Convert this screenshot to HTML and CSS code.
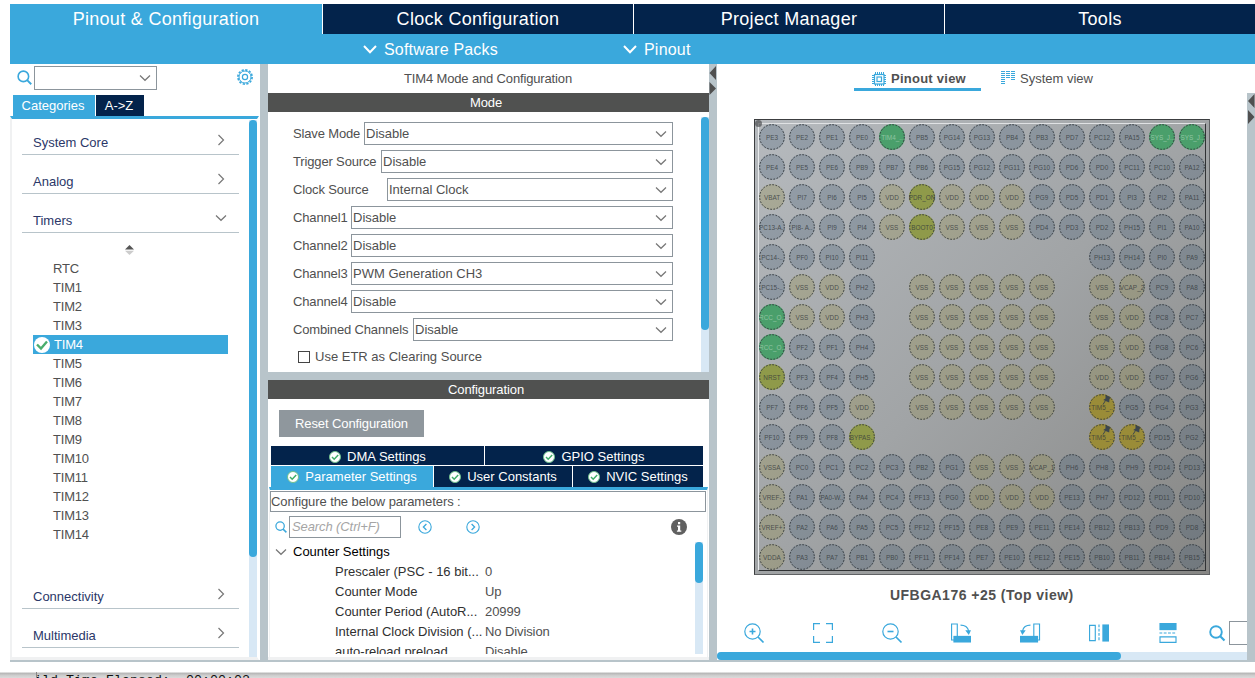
FILE: index.html
```html
<!DOCTYPE html>
<html lang="en">
<head>
<meta charset="utf-8">
<title>Pinout &amp; Configuration</title>
<link rel="stylesheet" href="styles.css">
</head>
<body>
<svg class="defs">
  <symbol id="down" viewBox="0 0 12 8"><path d="M1 1.5 6 6.3 11 1.5" fill="none" stroke="currentColor" stroke-width="1.2"/></symbol>
  <symbol id="right" viewBox="0 0 8 12"><path d="M1.5 1 6.5 6 1.5 11" fill="none" stroke="currentColor" stroke-width="1.2"/></symbol>
  <symbol id="search" viewBox="0 0 16 16"><circle cx="6.8" cy="6.8" r="5.6" fill="none" stroke="currentColor" stroke-width="1.7"/><path d="M10.8 10.8 15.2 15.2" stroke="currentColor" stroke-width="2"/></symbol>
  <symbol id="ok" viewBox="0 0 12 12"><circle cx="6" cy="6" r="5.5" fill="#fff" stroke="#6fc08c"/><path d="M3 6 5.2 8.2 9.2 4" fill="none" stroke="#3fae69" stroke-width="1.5"/></symbol>
</svg>
<div class="window">
  <nav class="main-tabs">
    <div class="main-tab active">Pinout &amp; Configuration</div>
    <div class="main-tab">Clock Configuration</div>
    <div class="main-tab">Project Manager</div>
    <div class="main-tab">Tools</div>
  </nav>
  <div class="sub-bar">
    <span class="sub-item packs"><svg viewBox="0 0 14 9"><path d="M1 1 7 7.2 13 1" fill="none" stroke="#fff" stroke-width="2"/></svg>Software Packs</span>
    <span class="sub-item"><svg viewBox="0 0 14 9"><path d="M1 1 7 7.2 13 1" fill="none" stroke="#fff" stroke-width="2"/></svg>Pinout</span>
  </div>
  <main class="panes">
    <aside class="left">
      <div class="left-search">
        <svg class="s16"><use href="#search"/></svg>
        <div class="combo find"><svg class="chev"><use href="#down"/></svg></div>
        <svg class="gear" viewBox="0 0 16 16" fill="none" stroke="#3aa8dc"><circle cx="8" cy="8" r="7.1" stroke-width="1.7" stroke-dasharray="2.3 1.42"/><circle cx="8" cy="8" r="6"/><circle cx="8" cy="8" r="2.6" stroke-width="1.2"/></svg>
      </div>
      <div class="left-tabs"><span class="on">Categories</span><span class="az">A-&gt;Z</span></div>
      <div class="left-body">
        <div class="cats">
          <div class="cat">System Core<svg class="cr"><use href="#right"/></svg></div>
          <div class="cat">Analog<svg class="cr"><use href="#right"/></svg></div>
          <div class="cat">Timers<svg class="chev"><use href="#down"/></svg></div>
          <svg class="sorter" viewBox="0 0 9 10"><path d="M0 4.4 4.5 0 9 4.4z" fill="#555"/><path d="M0 5.8h9L4.5 10z" fill="#ccc"/></svg>
          <ul class="timers" id="timers"></ul>
          <div class="cat">Connectivity<svg class="cr"><use href="#right"/></svg></div>
          <div class="cat">Multimedia<svg class="cr"><use href="#right"/></svg></div>
        </div>
        <div class="track"><div class="thumb left-thumb"></div></div>
      </div>
    </aside>
    <section class="middle">
      <h2 class="mid-title">TIM4 Mode and Configuration</h2>
      <div class="bar">Mode</div>
      <div class="mode">
        <div class="mode-form">
          <div class="row">Slave Mode<div class="combo c1">Disable<svg class="chev"><use href="#down"/></svg></div></div>
          <div class="row">Trigger Source<div class="combo c2">Disable<svg class="chev"><use href="#down"/></svg></div></div>
          <div class="row">Clock Source<div class="combo c3">Internal Clock<svg class="chev"><use href="#down"/></svg></div></div>
          <div class="row">Channel1<div class="combo c4">Disable<svg class="chev"><use href="#down"/></svg></div></div>
          <div class="row">Channel2<div class="combo c4">Disable<svg class="chev"><use href="#down"/></svg></div></div>
          <div class="row">Channel3<div class="combo c4">PWM Generation CH3<svg class="chev"><use href="#down"/></svg></div></div>
          <div class="row">Channel4<div class="combo c4">Disable<svg class="chev"><use href="#down"/></svg></div></div>
          <div class="row">Combined Channels<div class="combo c5">Disable<svg class="chev"><use href="#down"/></svg></div></div>
          <div class="check"><i class="box"></i>Use ETR as Clearing Source</div>
        </div>
        <div class="track mode-track"><div class="thumb mode-thumb"></div></div>
      </div>
      <div class="split"></div>
      <div class="bar">Configuration</div>
      <div class="config">
        <div class="reset">Reset Configuration</div>
        <div class="ctabs top"><span><svg class="ok"><use href="#ok"/></svg>DMA Settings</span><span><svg class="ok"><use href="#ok"/></svg>GPIO Settings</span></div>
        <div class="ctabs bottom"><span class="on"><svg class="ok"><use href="#ok"/></svg>Parameter Settings</span><span><svg class="ok"><use href="#ok"/></svg>User Constants</span><span><svg class="ok"><use href="#ok"/></svg>NVIC Settings</span></div>
        <div class="cpanel">
          <div class="hint">Configure the below parameters :</div>
          <div class="psearch">
            <svg class="s12"><use href="#search"/></svg>
            <div class="pinput">Search (Ctrl+F)</div>
            <svg class="nav prev" viewBox="0 0 14 14" fill="none" stroke="#3aa8dc"><circle cx="7" cy="7" r="6.2" stroke-width="1.1"/><path d="M8.4 4 5.4 7l3 3" stroke-width="1.3"/></svg>
            <svg class="nav next" viewBox="0 0 14 14" fill="none" stroke="#3aa8dc"><circle cx="7" cy="7" r="6.2" stroke-width="1.1"/><path d="M5.6 4l3 3-3 3" stroke-width="1.3"/></svg>
            <svg class="info" viewBox="0 0 16 16"><circle cx="8" cy="8" r="8" fill="#606060"/><path d="M7 3h2.2v2.2H7zM6 6.5h3.2v5H10.3v1.3H5.9v-1.3H7V7.8H6z" fill="#fff"/></svg>
          </div>
          <div class="ptree">
            <div class="prows">
              <div class="phead"><svg class="chev"><use href="#down"/></svg>Counter Settings</div>
              <div class="prow"><span>Prescaler (PSC - 16 bit...</span><b>0</b></div>
              <div class="prow"><span>Counter Mode</span><b>Up</b></div>
              <div class="prow"><span>Counter Period (AutoR...</span><b>20999</b></div>
              <div class="prow"><span>Internal Clock Division (...</span><b>No Division</b></div>
              <div class="prow"><span>auto-reload preload</span><b>Disable</b></div>
            </div>
            <div class="track ptrack"><div class="thumb pthumb"></div></div>
          </div>
        </div>
      </div>
    </section>
    <div class="divider"><svg viewBox="0 0 8 32"><path d="M7 2v14L.5 9zM.5 18v13L7 24.500z" fill="#505050"/></svg></div>
    <section class="right">
      <div class="vtabs">
        <div class="vtab on"><svg class="chip" viewBox="0 0 14 14" fill="none" stroke="#3aa8dc"><path d="M3.500 0v14M5.500 0v14M7.500 0v14M9.500 0v14M11.500 0v14M0 3.500h14M0 5.500h14M0 7.500h14M0 9.500h14M0 11.500h14" stroke-width="1"/><rect x="2.500" y="2.500" width="9.500" height="9.500" fill="#fff" stroke-width="1.200"/><rect x="5" y="5" width="4.500" height="4.500" stroke-width="1.200"/></svg>Pinout view</div>
        <div class="vtab"><svg class="sys" viewBox="0 0 14 14" fill="none" stroke="#3aa8dc"><path d="M0 .500h4M0 2.500h4M0 4.500h4M0 6.500h4M0 8.500h4M0 10.500h4M0 12.500h4M5 .500h4M5 2.500h4M5 4.500h4M5 6.500h4M10 .500h4M10 2.500h4M10 4.500h4M10 6.500h4M10 8.500h4"/></svg>System view</div>
      </div>
      <div class="canvas-wrap">
        <div class="canvas">
          <div class="package"><i class="mark"></i><div class="pins" id="pins"></div></div>
          <div class="pkg-name">UFBGA176 +25 (Top view)</div>
          <div class="tools">
            <svg viewBox="0 0 20 20"><circle cx="8.500" cy="8.500" r="7.700"/><path d="M8.500 5.500v6M5.500 8.500h6" stroke-width="1.600"/><path d="M14 14l5.500 5.500" stroke-width="1.700"/></svg>
            <svg viewBox="0 0 20 20"><path d="M.6 7V.6H7M13 .6h6.400V7M19.400 13v6.400H13M7 19.400H.6V13"/></svg>
            <svg viewBox="0 0 20 20"><circle cx="8.500" cy="8.500" r="7.700"/><path d="M5.500 8.500h6" stroke-width="1.600"/><path d="M14 14l5.500 5.500" stroke-width="1.700"/></svg>
            <svg viewBox="0 0 21 20"><path d="M.6.600h6v16.800h-6z"/><path d="M2.500 13H21v7H2.500z" fill="#3aa8dc" stroke="none"/><path d="M10 1.800c4 0 7.500 2 8.600 6"/><path d="M15 7h6l-2.300 5z" fill="#3aa8dc" stroke="none"/></svg>
            <svg viewBox="0 0 21 20"><path d="M14.500.600h6v16.800h-6z"/><path d="M0 13h19v7H0z" fill="#3aa8dc" stroke="none"/><path d="M11 1.800C7 1.800 3.500 4 2.600 8"/><path d="M0 7h6l-3.500 5z" fill="#3aa8dc" stroke="none"/></svg>
            <svg viewBox="0 0 21 20"><path d="M.6 2h6v16h-6z"/><path d="M10.500 1v18" stroke-dasharray="3 1.500"/><path d="M14 1h7v18h-7z" fill="#3aa8dc" stroke="none"/></svg>
            <svg viewBox="0 0 20 21"><path d="M1 0h18v7.500H1z" fill="#3aa8dc" stroke="none"/><path d="M1 10.500h18" stroke-dasharray="3 1.500"/><path d="M1.600 14.500h16.800v5.900H1.600z"/></svg>
          </div>
          <div class="tool-search"><svg class="s17" viewBox="0 0 16 16"><circle cx="7" cy="7" r="5.800" fill="none" stroke="#3aa8dc" stroke-width="1.900"/><path d="M11 11l4.500 4.500" stroke="#3aa8dc" stroke-width="2.200"/></svg><div class="tinput"></div></div>
          <div class="htrack"><div class="hthumb"></div></div>
        </div>
        <div class="edge"><svg viewBox="0 0 8 32"><path d="M7.500 1v14L1 8zM1 17v14L7.500 24z" fill="#505050"/></svg></div>
      </div>
    </section>
  </main>
</div>
<footer class="console"><div class="log">ild Time Elapsed:&nbsp; 00:00:02</div></footer>
<script src="script.js"></script>
</body>
</html>
```
FILE: styles.css
```css
* { box-sizing: border-box; }
body { margin: 0; width: 1255px; height: 678px; overflow: hidden; background: #fff; font: 13px/18px "Liberation Sans", Arial, sans-serif; color: #505050; white-space: nowrap; }
svg { display: block; flex: none; overflow: visible; }
.defs { position: absolute; width: 0; height: 0; }
.window { padding: 4px 0 0 10px; height: 672px; }
.main-tabs { display: grid; grid-template-columns: 312px 310px 310px 310px; gap: 1px; height: 30px; }
.main-tab { background: #03234b; color: #fff; font-size: 18px; line-height: 31px; height: 30px; text-align: center; letter-spacing: .3px; }
.main-tab.active { background: #3aa8dc; }
.sub-bar { display: flex; height: 30px; background: #3aa8dc; color: #fff; font-size: 16px; line-height: 30px; padding: 1px 0 0 353px; letter-spacing: .2px; }
.sub-item { display: flex; align-items: center; gap: 7px; width: 260px; }
.sub-item svg { width: 14px; height: 9px; }
.panes { display: flex; height: 598px; border-bottom: 2px solid #b8c4ca; }

.left { width: 258px; border-right: 8px solid #b8c4ca; display: flex; flex-direction: column; }
.left-search { display: flex; flex: none; height: 31px; padding: 2px 0 0 7px; color: #3aa8dc; }
.s16 { width: 15px; height: 15px; margin-top: 4px; }
.combo { border: 1px solid #8c959c; height: 23px; flex: 1; display: flex; align-items: center; justify-content: space-between; padding: 0 5px 0 1px; color: #505050; letter-spacing: 0; }
.combo.find { flex: none; width: 123px; height: 24px; margin-left: 2px; justify-content: flex-end; }
.chev { width: 12px; height: 8px; color: #777; }
.cr { width: 8px; height: 12px; color: #777; margin: 0 2px 6px 0; }
.gear { width: 16px; height: 16px; margin: 3px 0 0 80px; }
.left-tabs { display: flex; flex: none; gap: 1px; height: 21px; padding-left: 3px; color: #fff; line-height: 21px; text-align: center; }
.left-tabs span { background: #3aa8dc; width: 82px; padding-right: 2px; }
.left-tabs .az { background: #03234b; width: 48px; }
.left-body { flex: none; height: 544px; display: flex; border-top: 3px solid #3aa8dc; border-left: 2px solid #f0f1f2; border-bottom: 3px solid #f0f1f2; margin-right: 1px; border-right: 2px solid #fff; padding-top: 1px; }
.cats { flex: 1; padding: 0 10px; }
.cat { display: flex; justify-content: space-between; align-items: center; height: 39px; padding: 15px 12px 0 11px; border-bottom: 1px solid #b8c4ca; color: #2b3768; }
.cat:first-child { height: 35px; padding-top: 11px; }
.cat .chev { margin-bottom: 5px; }
.sorter { width: 9px; height: 10px; margin: 12px auto 0 103px; }
.timers { list-style: none; margin: 4px 11px 26px; padding: 0; letter-spacing: -.2px; }
.timers li { height: 19px; line-height: 19px; padding-left: 20px; color: #505050; }
.timers .sel { background: #3aa8dc; color: #fff; display: flex; align-items: center; gap: 4px; padding-left: 1px; }
.timers .sel svg { width: 16px; height: 16px; }
.track { width: 8px; background: #d8e8f5; }
.thumb { width: 8px; background: #3aa8dc; border-radius: 4px; }
.left-thumb { height: 437px; }

.middle { width: 441px; display: flex; flex-direction: column; }
.mid-title { margin: 0; height: 29px; font: inherit; line-height: 29px; text-align: center; letter-spacing: -.15px; padding-right: 1px; }
.bar { height: 19px; flex: none; background: #505150; color: #fff; line-height: 19px; text-align: center; padding-right: 5px; letter-spacing: -.1px; }
.mode { display: flex; height: 260px; padding-top: 5px; }
.mode-form { flex: 1; padding: 5px 28px 0 25px; }
.row { display: flex; align-items: center; justify-content: space-between; height: 23px; margin-bottom: 5px; letter-spacing: -.15px; }
.row .combo { flex: none; }
.c1 { width: 309px; }
.c2 { width: 292px; }
.c3 { width: 286px; }
.c4 { width: 322px; }
.c5 { width: 260px; }
.check { display: flex; align-items: center; gap: 5px; padding-left: 5px; height: 22px; }
.box { width: 12px; height: 12px; border: 1px solid #444; }
.mode-thumb { height: 213px; }
.split { height: 8px; background: #b8c4ca; }
.config { flex: 1; display: flex; flex-direction: column; padding: 11px 1px 0; border-bottom: 3px solid #f0f1f2; overflow: hidden; }
.reset { width: 145px; height: 27px; margin: 0 0 9px 10px; background: #8f979d; color: #fff; text-align: center; line-height: 27px; letter-spacing: -.1px; }
.ctabs { display: grid; gap: 1px; margin: 0 5px 0 2px; color: #fff; line-height: 16px; }
.ctabs.top { grid-template-columns: 213px 218px; height: 19px; margin-bottom: 1px; }
.ctabs.top span { padding-top: 2px; }
.ctabs.bottom { grid-template-columns: 162px 138px 130px; height: 21px; }
.ctabs span { background: #03234b; display: flex; align-items: center; justify-content: center; gap: 6px; padding-top: 1px; }
.ctabs .on { background: #3aa8dc; }
.ok { width: 12px; height: 12px; }
.cpanel { flex: 1; display: flex; flex-direction: column; border: 1px solid #f0f1f2; border-top: 3px solid #3aa8dc; border-bottom: 0; padding-top: 1px; }
.hint { height: 21px; line-height: 19px; width: 436px; border: 1px solid #8c959c; letter-spacing: -.08px; }
.psearch { display: flex; align-items: center; height: 30px; padding-left: 5px; color: #3aa8dc; }
.s12 { width: 12px; height: 12px; }
.pinput { width: 112px; height: 22px; line-height: 20px; margin-left: 2px; padding-left: 2px; border: 1px solid #8c959c; font-style: italic; color: #a5a5a5; letter-spacing: -.1px; }
.nav { width: 14px; height: 14px; }
.prev { margin-left: 17px; }
.next { margin-left: 34px; }
.info { width: 16px; height: 16px; margin-left: 191px; }
.ptree { display: flex; height: 112px; }
.prows { flex: 1; overflow: hidden; color: #303030; }
.phead, .prow { height: 20px; line-height: 19px; }
.phead { display: flex; align-items: center; gap: 6px; padding: 0 0 1px 5px; color: #000; }
.prow { display: grid; grid-template-columns: 150px 1fr; padding-left: 65px; }
.prow b { font-weight: normal; color: #505050; letter-spacing: -.1px; }
.ptrack { margin-right: 4px; }
.pthumb { height: 41px; }
.divider { width: 8px; background: #b8c4ca; }
.divider svg { width: 8px; height: 32px; }

.right { width: 538px; display: flex; flex-direction: column; }
.vtabs { display: flex; height: 29px; padding-left: 137px; gap: 18px; }
.vtab { display: flex; height: 27px; align-items: center; gap: 5px; border-bottom: 3px solid transparent; padding-top: 5px; }
.vtab.on { width: 127px; border-color: #3aa8dc; font-weight: bold; letter-spacing: .25px; padding-left: 18px; }
.chip { width: 14px; height: 14px; }
.sys { width: 14px; height: 14px; margin: 0 0 2px 2px; }
.canvas-wrap { display: flex; height: 567px; }
.canvas { width: 530px; display: grid; grid-template-columns: 490px 40px; grid-template-rows: 482px 38px 39px 8px; overflow: hidden; }
.edge { width: 8px; height: 569px; background: #b8c4ca; }
.edge svg { width: 8px; height: 32px; }
.package { grid-column: 1 / 3; position: relative; width: 456px; height: 456px; margin: 26px 0 0 37px; border: 1px solid #3c3e40; border-right-color: #606264; border-bottom-color: #606264; padding: 3px; background: linear-gradient(135deg, #b6babe 0%, #a1a4a6 50%, #868684 100%); }
.mark { position: absolute; left: 0; top: 0; width: 7px; height: 7px; border-radius: 50%; background: rgba(60, 62, 64, .6); }
.pins { display: grid; grid-template-columns: repeat(15, 30px); grid-auto-rows: 30px; width: 448px; height: 448px; border: 1px solid #303234; border-left-color: #e8eaec; border-top-color: #e0e2e4; }
.pin { width: 26px; height: 26px; border-radius: 50%; background: rgba(50, 78, 106, .25); font-size: 6.4px; line-height: 27px; color: rgba(50, 55, 58, .8); display: flex; justify-content: center; position: relative; }
.pin.power { background: rgba(145, 140, 70, .3); }
.pin.boot { background: #8f9a4a; }
.pin.green { background: #4a9f6b; color: #8fc4a2; }
.pin.gold { background: #9a8c38; }
.pin.none { visibility: hidden; }
.ring { position: absolute; left: 0; top: 0; width: 26px; height: 26px; fill: none; stroke: #34393d; stroke-dasharray: 1.6 1.62; }
.pushpin { position: absolute; right: 4px; top: 1px; width: 9px; height: 10px; }
.pkg-name { grid-column: 1 / 3; font-size: 14px; font-weight: bold; letter-spacing: .47px; padding-left: 173px; line-height: 40px; }
.tools { display: flex; gap: 49px; padding: 10px 0 0 27px; height: 33px; fill: none; stroke: #3aa8dc; stroke-width: 1.2; }
.tools svg { width: 20px; height: 20px; }
.tool-search { display: flex; gap: 4px; padding: 8px 0 0 2px; }
.s17 { width: 16px; height: 16px; margin-top: 4px; }
.tinput { width: 40px; height: 24px; flex: none; border: 1px solid #8c959c; }
.htrack { grid-column: 1 / 3; background: #d8e8f5; border-radius: 4px 0 0 4px; }
.hthumb { width: 404px; height: 8px; border-radius: 4px; background: #3aa8dc; }

.console { height: 6px; overflow: hidden; background: linear-gradient(#eee 0, #b9b9b9 25%, #cfcfcf 60%, #dadada 100%); }
.log { margin-left: 36px; width: 215px; height: 6px; padding-top: 1px; font: 13.33px/16px "Liberation Mono", "Courier New", monospace; color: #111; border-left: 1px solid #888; text-indent: -3px; overflow: hidden; }
```
FILE: script.js
```js
const timers = ["RTC"].concat(Array.from({ length: 14 }, (_, i) => "TIM" + (i + 1)));
document.getElementById("timers").innerHTML = timers.map(t => t === "TIM4"
  ? '<li class="sel"><svg viewBox="0 0 16 16"><circle cx="8" cy="8" r="8" fill="#fff"/><path d="M3 7.500 7 11.500 13 4.500" fill="none" stroke="#49ad6d" stroke-width="2.400"/></svg>TIM4</li>'
  : `<li>${t}</li>`).join("");

// One line per ball row; a dash is an unpopulated position.
const rows = `PE3 PE2 PE1 PE0 TIM4_.. PB5 PG14 PG13 PB4 PB3 PD7 PC12 PA15 SYS_J.. SYS_J..
PE4 PE5 PE6 PB9 PB7 PB6 PG15 PG12 PG11 PG10 PD6 PD0 PC11 PC10 PA12
VBAT PI7 PI6 PI5 VDD PDR_ON VDD VDD VDD PG9 PD5 PD1 PI3 PI2 PA11
PC13-A.. PI8-~A.. PI9 PI4 VSS BOOT0 VSS VSS VSS PD4 PD3 PD2 PH15 PI1 PA10
PC14-.. PF0 PI10 PI11 - - - - - - - PH13 PH14 PI0 PA9
PC15-.. VSS VDD PH2 - VSS VSS VSS VSS VSS - VSS VCAP_2 PC9 PA8
RCC_O.. VSS VDD PH3 - VSS VSS VSS VSS VSS - VSS VDD PC8 PC7
RCC_O.. PF2 PF1 PH4 - VSS VSS VSS VSS VSS - VSS VDD PG8 PC6
NRST PF3 PF4 PH5 - VSS VSS VSS VSS VSS - VDD VDD PG7 PG6
PF7 PF6 PF5 VDD - VSS VSS VSS VSS VSS - TIM5_.. PG5 PG4 PG3
PF10 PF9 PF8 BYPAS.. - - - - - - - TIM5_.. TIM5_.. PD15 PG2
VSSA PC0 PC1 PC2 PC3 PB2 PG1 VSS VSS VCAP_1 PH6 PH8 PH9 PD14 PD13
VREF- PA1 PA0-W.. PA4 PC4 PF13 PG0 VDD VDD VDD PE13 PH7 PD12 PD11 PD10
VREF+ PA2 PA6 PA5 PC5 PF12 PF15 PE8 PE9 PE11 PE14 PB12 PB13 PD9 PD8
VDDA PA3 PA7 PB1 PB0 PF11 PF14 PE7 PE10 PE12 PE15 PB10 PB11 PB14 PB15`;

const kind = n => n === "-" ? "none"
  : /^V/.test(n) ? "power"
  : /^(PDR|BOOT|NRST|BYPAS)/.test(n) ? "boot"
  : /^(TIM4|SYS|RCC)/.test(n) ? "green"
  : /^TIM5/.test(n) ? "gold" : "io";
const ring = '<svg class="ring" viewBox="0 0 26 26"><circle cx="13" cy="13" r="12.300"/></svg>';
const pushpin = '<svg class="pushpin" viewBox="0 0 9 10"><path d="M3.500 0l5.500 2.500-1.500 1.500-.3 3.500-6-2.500 2.300-1.500z" fill="#3c464e"/><path d="M3.500 5.500 1 9.500" stroke="#3c464e"/></svg>';

document.getElementById("pins").innerHTML = rows.split(/\s+/).map(n => {
  const k = kind(n);
  return k === "none" ? '<div class="pin none"></div>'
    : `<div class="pin ${k}">${n.replace("~", " ")}${ring}${k === "gold" ? pushpin : ""}</div>`;
}).join("");
```
